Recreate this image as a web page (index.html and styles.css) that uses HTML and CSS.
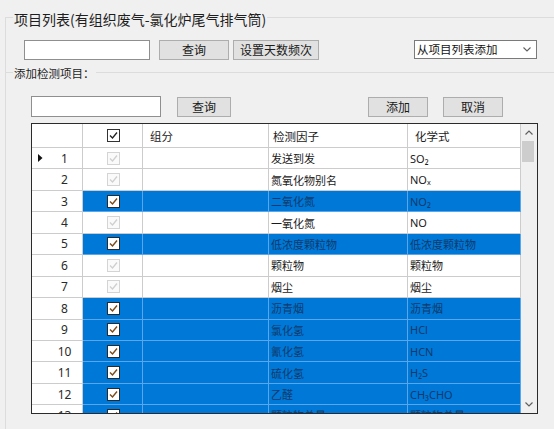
FILE: index.html
```html
<!DOCTYPE html>
<html lang="zh-CN">
<head>
<meta charset="utf-8">
<title>项目列表</title>
<link rel="stylesheet" href="styles.css">
</head>
<body>
<div class="group">
  <div class="group-title">项目列表(有组织废气-氯化炉尾气排气筒)</div>
  <div class="toolbar">
    <div class="textbox tb1"></div>
    <div class="btn b-query1">查询</div>
    <div class="btn b-freq">设置天数频次</div>
    <div class="combo">
      <span>从项目列表添加</span>
      <svg class="chev" width="8" height="5" viewBox="0 0 8 5"><polyline points="0.5,0.5 4,4 7.5,0.5" fill="none" stroke="#606060" stroke-width="1.1"/></svg>
    </div>
  </div>
  <div class="subgroup">
    <div class="subgroup-title">添加检测项目：</div>
    <div class="toolbar2">
      <div class="textbox tb2"></div>
      <div class="btn b-query2">查询</div>
      <div class="btn b-add">添加</div>
      <div class="btn b-cancel">取消</div>
    </div>
    <div class="grid">
      <div class="table">
        <div class="row head">
          <div class="c rh"></div>
          <div class="c cbc"><svg width="13" height="13" viewBox="0 0 13 13"><rect x="0.5" y="0.5" width="12" height="12" fill="#fff" stroke="#333"/><polyline points="3,6.5 5.5,9 10,3.5" fill="none" stroke="#222" stroke-width="1.3"/></svg></div>
          <div class="c h3">组分</div>
          <div class="c h4">检测因子</div>
          <div class="c h5">化学式</div>
        </div>

        <div class="row">
          <div class="c rh"><span class="ind"><svg width="5" height="8" viewBox="0 0 5 8"><polygon points="0,0 4.5,4 0,8" fill="#111"/></svg></span><span class="num">1</span></div>
          <div class="c cbc"><svg width="13" height="13" viewBox="0 0 13 13"><rect x="0.5" y="0.5" width="12" height="12" fill="#fafafa" stroke="#d4d4d4"/><polyline points="3,6.5 5.5,9 10,3.5" fill="none" stroke="#cfcfcf" stroke-width="1.3"/></svg></div>
          <div class="c t3"></div>
          <div class="c t4">发送到发</div>
          <div class="c t5">SO₂</div>
        </div>

        <div class="row">
          <div class="c rh"><span class="ind"></span><span class="num">2</span></div>
          <div class="c cbc"><svg width="13" height="13" viewBox="0 0 13 13"><rect x="0.5" y="0.5" width="12" height="12" fill="#fafafa" stroke="#d4d4d4"/><polyline points="3,6.5 5.5,9 10,3.5" fill="none" stroke="#cfcfcf" stroke-width="1.3"/></svg></div>
          <div class="c t3"></div>
          <div class="c t4">氮氧化物别名</div>
          <div class="c t5">NOₓ</div>
        </div>

        <div class="row sel">
          <div class="c rh"><span class="ind"></span><span class="num">3</span></div>
          <div class="c cbc"><svg width="13" height="13" viewBox="0 0 13 13"><rect x="0.5" y="0.5" width="12" height="12" fill="#fff" stroke="#2a2a2a"/><polyline points="3,6.5 5.5,9 10,3.5" fill="none" stroke="#7a4a18" stroke-width="1.4"/></svg></div>
          <div class="c t3"></div>
          <div class="c t4">二氧化氮</div>
          <div class="c t5">NO₂</div>
        </div>

        <div class="row">
          <div class="c rh"><span class="ind"></span><span class="num">4</span></div>
          <div class="c cbc"><svg width="13" height="13" viewBox="0 0 13 13"><rect x="0.5" y="0.5" width="12" height="12" fill="#fafafa" stroke="#d4d4d4"/><polyline points="3,6.5 5.5,9 10,3.5" fill="none" stroke="#cfcfcf" stroke-width="1.3"/></svg></div>
          <div class="c t3"></div>
          <div class="c t4">一氧化氮</div>
          <div class="c t5">NO</div>
        </div>

        <div class="row sel">
          <div class="c rh"><span class="ind"></span><span class="num">5</span></div>
          <div class="c cbc"><svg width="13" height="13" viewBox="0 0 13 13"><rect x="0.5" y="0.5" width="12" height="12" fill="#fff" stroke="#2a2a2a"/><polyline points="3,6.5 5.5,9 10,3.5" fill="none" stroke="#7a4a18" stroke-width="1.4"/></svg></div>
          <div class="c t3"></div>
          <div class="c t4">低浓度颗粒物</div>
          <div class="c t5">低浓度颗粒物</div>
        </div>

        <div class="row">
          <div class="c rh"><span class="ind"></span><span class="num">6</span></div>
          <div class="c cbc"><svg width="13" height="13" viewBox="0 0 13 13"><rect x="0.5" y="0.5" width="12" height="12" fill="#fafafa" stroke="#d4d4d4"/><polyline points="3,6.5 5.5,9 10,3.5" fill="none" stroke="#cfcfcf" stroke-width="1.3"/></svg></div>
          <div class="c t3"></div>
          <div class="c t4">颗粒物</div>
          <div class="c t5">颗粒物</div>
        </div>

        <div class="row">
          <div class="c rh"><span class="ind"></span><span class="num">7</span></div>
          <div class="c cbc"><svg width="13" height="13" viewBox="0 0 13 13"><rect x="0.5" y="0.5" width="12" height="12" fill="#fafafa" stroke="#d4d4d4"/><polyline points="3,6.5 5.5,9 10,3.5" fill="none" stroke="#cfcfcf" stroke-width="1.3"/></svg></div>
          <div class="c t3"></div>
          <div class="c t4">烟尘</div>
          <div class="c t5">烟尘</div>
        </div>

        <div class="row sel">
          <div class="c rh"><span class="ind"></span><span class="num">8</span></div>
          <div class="c cbc"><svg width="13" height="13" viewBox="0 0 13 13"><rect x="0.5" y="0.5" width="12" height="12" fill="#fff" stroke="#2a2a2a"/><polyline points="3,6.5 5.5,9 10,3.5" fill="none" stroke="#7a4a18" stroke-width="1.4"/></svg></div>
          <div class="c t3"></div>
          <div class="c t4">沥青烟</div>
          <div class="c t5">沥青烟</div>
        </div>

        <div class="row sel">
          <div class="c rh"><span class="ind"></span><span class="num">9</span></div>
          <div class="c cbc"><svg width="13" height="13" viewBox="0 0 13 13"><rect x="0.5" y="0.5" width="12" height="12" fill="#fff" stroke="#2a2a2a"/><polyline points="3,6.5 5.5,9 10,3.5" fill="none" stroke="#7a4a18" stroke-width="1.4"/></svg></div>
          <div class="c t3"></div>
          <div class="c t4">氯化氢</div>
          <div class="c t5">HCl</div>
        </div>

        <div class="row sel">
          <div class="c rh"><span class="ind"></span><span class="num">10</span></div>
          <div class="c cbc"><svg width="13" height="13" viewBox="0 0 13 13"><rect x="0.5" y="0.5" width="12" height="12" fill="#fff" stroke="#2a2a2a"/><polyline points="3,6.5 5.5,9 10,3.5" fill="none" stroke="#7a4a18" stroke-width="1.4"/></svg></div>
          <div class="c t3"></div>
          <div class="c t4">氰化氢</div>
          <div class="c t5">HCN</div>
        </div>

        <div class="row sel">
          <div class="c rh"><span class="ind"></span><span class="num">11</span></div>
          <div class="c cbc"><svg width="13" height="13" viewBox="0 0 13 13"><rect x="0.5" y="0.5" width="12" height="12" fill="#fff" stroke="#2a2a2a"/><polyline points="3,6.5 5.5,9 10,3.5" fill="none" stroke="#7a4a18" stroke-width="1.4"/></svg></div>
          <div class="c t3"></div>
          <div class="c t4">硫化氢</div>
          <div class="c t5">H₂S</div>
        </div>

        <div class="row sel">
          <div class="c rh"><span class="ind"></span><span class="num">12</span></div>
          <div class="c cbc"><svg width="13" height="13" viewBox="0 0 13 13"><rect x="0.5" y="0.5" width="12" height="12" fill="#fff" stroke="#2a2a2a"/><polyline points="3,6.5 5.5,9 10,3.5" fill="none" stroke="#7a4a18" stroke-width="1.4"/></svg></div>
          <div class="c t3"></div>
          <div class="c t4">乙醛</div>
          <div class="c t5">CH₃CHO</div>
        </div>

        <div class="row sel">
          <div class="c rh"><span class="ind"></span><span class="num">13</span></div>
          <div class="c cbc"><svg width="13" height="13" viewBox="0 0 13 13"><rect x="0.5" y="0.5" width="12" height="12" fill="#fff" stroke="#2a2a2a"/><polyline points="3,6.5 5.5,9 10,3.5" fill="none" stroke="#7a4a18" stroke-width="1.4"/></svg></div>
          <div class="c t3"></div>
          <div class="c t4">颗粒物总量</div>
          <div class="c t5">颗粒物总量</div>
        </div>
      </div>
      <div class="vscroll">
        <div class="sb-btn"><svg width="8" height="5" viewBox="0 0 8 5"><polyline points="0.5,4.5 4,1 7.5,4.5" fill="none" stroke="#606060" stroke-width="1.2"/></svg></div>
        <div class="thumb"></div>
        <div class="sb-track"></div>
        <div class="sb-btn"><svg width="8" height="5" viewBox="0 0 8 5"><polyline points="0.5,0.5 4,4 7.5,0.5" fill="none" stroke="#606060" stroke-width="1.2"/></svg></div>
      </div>
    </div>
  </div>
</div>
</body>
</html>
```

FILE: styles.css
```css
html, body {
  margin: 0;
  padding: 0;
}
body {
  width: 554px;
  height: 429px;
  overflow: hidden;
  background: #f0f0f0;
  font-family: "Noto Sans CJK SC", sans-serif;
  color: #1a1a1a;
}

.group {
  margin: 17px 0 0 5px;
  height: 420px;
  border-top: 1px solid #dcdcdc;
  border-left: 1px solid #dcdcdc;
}
.group-title {
  width: max-content;
  margin: -7px 0 0 7px;
  padding: 0 1px;
  background: #f0f0f0;
  font-size: 14px;
  line-height: 16px;
  color: #1e1e1e;
}

.toolbar {
  display: flex;
  margin-top: 13px;
  padding-left: 18px;
}
.toolbar2 {
  display: flex;
  align-items: flex-start;
  margin-top: 16px;
  padding-left: 25px;
}

.textbox {
  box-sizing: border-box;
  height: 20px;
  background: #fff;
  border: 1px solid #8f8f8f;
}
.tb1 { width: 126px; }
.tb2 { width: 130px; height: 21px; }

.btn {
  box-sizing: border-box;
  height: 20px;
  background: #e1e1e1;
  border: 1px solid #adadad;
  font-size: 12px;
  line-height: 18px;
  text-align: center;
  color: #1a1a1a;
}
.b-query1 { width: 70px; margin-left: 9px; }
.b-freq { width: 86px; margin-left: 4px; }
.b-query2 { width: 54px; margin-left: 16px; margin-top: 1px; }
.b-add { width: 60px; margin-left: 137px; margin-top: 1px; }
.b-cancel { width: 60px; margin-left: 15px; margin-top: 1px; }

.combo {
  box-sizing: border-box;
  width: 123px;
  height: 19px;
  margin-left: 95px;
  display: flex;
  align-items: center;
  justify-content: space-between;
  padding: 0 5px 0 2px;
  background: #fff;
  border: 1px solid #7a7a7a;
  font-size: 11.5px;
  line-height: 17px;
  color: #111;
}
.chev { display: block; }

.subgroup {
  margin-top: 12px;
  border-top: 1px solid #dcdcdc;
}
.subgroup-title {
  width: max-content;
  margin: -7px 0 0 7px;
  padding: 0 1px;
  background: #f0f0f0;
  font-size: 11.5px;
  line-height: 14px;
  color: #1e1e1e;
}

.grid {
  box-sizing: border-box;
  display: flex;
  width: 507px;
  height: 291px;
  margin: 6px 0 0 25px;
  border: 1px solid #2b2b2b;
  background: #fff;
  overflow: hidden;
}
.table {
  width: 489px;
  flex: none;
}
.row {
  display: grid;
  grid-template-columns: 51px 60px 126px 139px 113px;
  height: 21.45px;
}
.row.head {
  height: 24px;
}
.c {
  box-sizing: border-box;
  display: flex;
  align-items: center;
  border-right: 1px solid #cccccc;
  border-bottom: 1px solid #cccccc;
  font-size: 11px;
  white-space: nowrap;
  overflow: hidden;
  background: #fff;
  color: #1a1a1a;
}
.row.head .c {
  font-size: 11.5px;
  color: #222;
}
.h3 { padding-left: 7px; }
.h4 { padding-left: 4px; }
.h5 { padding-left: 7px; }
.cbc {
  justify-content: center;
  padding-left: 1px;
}
.cbc svg { display: block; }
.t4, .t5 {
  padding-left: 2px;
  font-family: "Noto Sans", "Noto Sans CJK SC", sans-serif;
}
.t4 { font-family: "Noto Sans CJK SC", sans-serif; }

.rh {
  padding-left: 6px;
}
.ind {
  width: 9px;
  display: flex;
  align-items: center;
}
.ind svg { display: block; }
.num {
  flex: 1;
  text-align: center;
  font-family: "Noto Sans", sans-serif;
  font-size: 12px;
  color: #2a2a2a;
}

.row.sel .c:not(.rh) {
  background: #0078d7;
  border-color: #5aa6ea;
  color: #0f3a6b;
}

.vscroll {
  width: 16px;
  flex: none;
  display: flex;
  flex-direction: column;
  background: #f0f0f0;
}
.sb-btn {
  height: 17px;
  display: flex;
  align-items: center;
  justify-content: center;
}
.sb-btn svg { display: block; }
.thumb {
  width: 12px;
  height: 21px;
  margin-left: 1px;
  background: #cdcdcd;
}
.sb-track {
  flex: 1;
}
```
